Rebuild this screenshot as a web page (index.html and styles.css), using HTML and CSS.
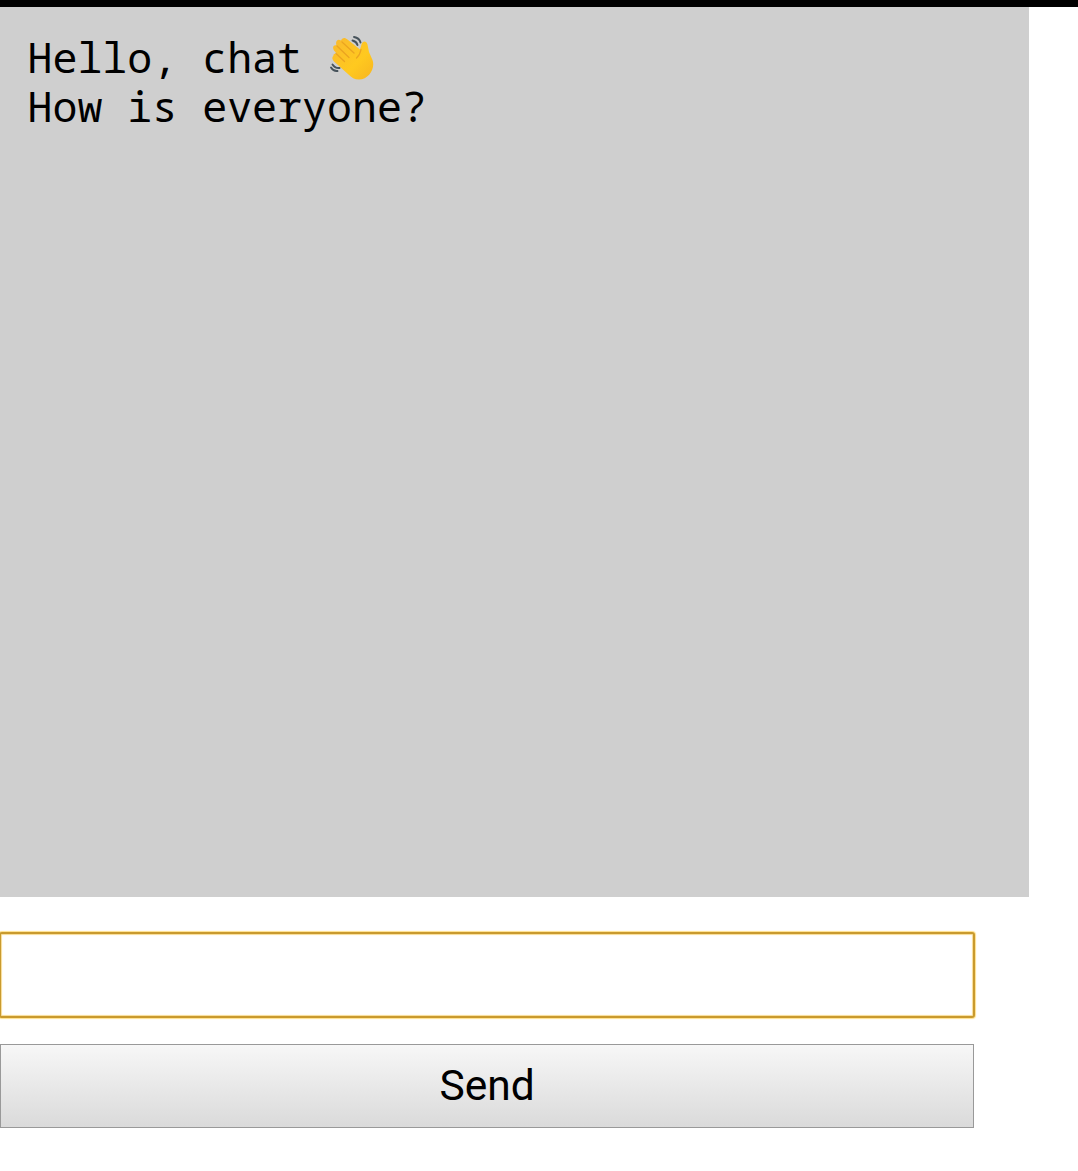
FILE: index.html
```html
<!DOCTYPE html>
<html lang="en">
<head>
<meta charset="utf-8">
<title>Chat</title>
<link rel="stylesheet" href="styles.css">
</head>
<body>
<div class="topbar"></div>
<main class="chat">
  <section class="log">
    <p class="line">Hello, chat <svg class="wave" viewBox="0 0 46 46" role="img" aria-label="waving hand">
      <defs>
        <linearGradient id="skin" x1="0" y1="0" x2="1" y2="1">
          <stop offset="0" stop-color="#f9b92f"/>
          <stop offset="0.6" stop-color="#ffc91f"/>
          <stop offset="1" stop-color="#f7b520"/>
        </linearGradient>
      </defs>
      <path fill="url(#skin)" d="M4 20.500C5 18 7 18.500 8.500 19.500L5 15.500C3 12.500 4.500 9.500 7.500 10.500C6 6.500 8.500 3.500 12 5.500C13 2.500 16 2 18.500 4.500L31 14.500L32.500 9.500C33.500 5.500 37.500 5.500 38.500 9.500L40 17L43.500 25C46.500 33 40 44.500 30 44.500C25.500 44.500 22.500 42.500 19.500 39.500L5.500 27C2.500 24 3 21.500 5 20.500Z"/>
      <path class="crease" d="M8 11L20 22.500M7 18.500L15.500 26.500M13 7L25 18M32 14.500Q31 20 27.500 23"/>
      <path class="motion" d="M23.500 5.500Q27.500 6.500 28.500 10M25 2Q30.500 3 31.500 7.500M3.500 29.500Q6 33.500 10.500 33M2 32.500Q4.500 36.500 8.500 36"/>
    </svg></p>
    <p class="line">How is everyone?</p>
  </section>
  <form class="composer">
    <input class="message" type="text" aria-label="Message">
    <button class="send" type="button">Send</button>
  </form>
</main>
</body>
</html>
```

FILE: styles.css
```css
body { margin: 0; background: #fff; color: #000; overflow-x: hidden; }
.topbar { height: 7px; background: #000; }
.log {
  box-sizing: border-box;
  width: 1029px;
  height: 890px;
  padding: 26px 27px 0 27.5px;
  background: #cfcfcf;
  font: 41.6px/49px "Noto Sans Mono", "Droid Sans Mono", "DejaVu Sans Mono", monospace;
}
.line { height: 49px; margin: 0; white-space: pre; }
.wave { width: 46px; height: 46px; vertical-align: -8px; margin-left: 2px; }
.crease { fill: none; stroke: #eba421; stroke-width: 1.3; stroke-linecap: round; }
.motion { fill: none; stroke: #47535b; stroke-width: 1.9; stroke-linecap: round; }
.composer { display: flex; flex-direction: column; width: 974px; padding-top: 35px; }
.message {
  box-sizing: border-box;
  width: 976px;
  height: 86px;
  margin-left: -1px;
  padding: 0 20px;
  border: 2px solid #c99a2e;
  border-radius: 3px;
  outline: none;
  background: #fff;
  box-shadow: 0 0 1px 1px #ffe08a, inset 0 0 1px 1px #f8dc94;
  font: 42px Roboto, sans-serif;
}
.send {
  height: 84px;
  margin: 26px 0 0;
  padding: 0 0 1px;
  border: 1px solid #999;
  border-radius: 0;
  background: linear-gradient(#f7f7f7, #dadada);
  color: #000;
  font: 42.5px Roboto, sans-serif;
}
```
